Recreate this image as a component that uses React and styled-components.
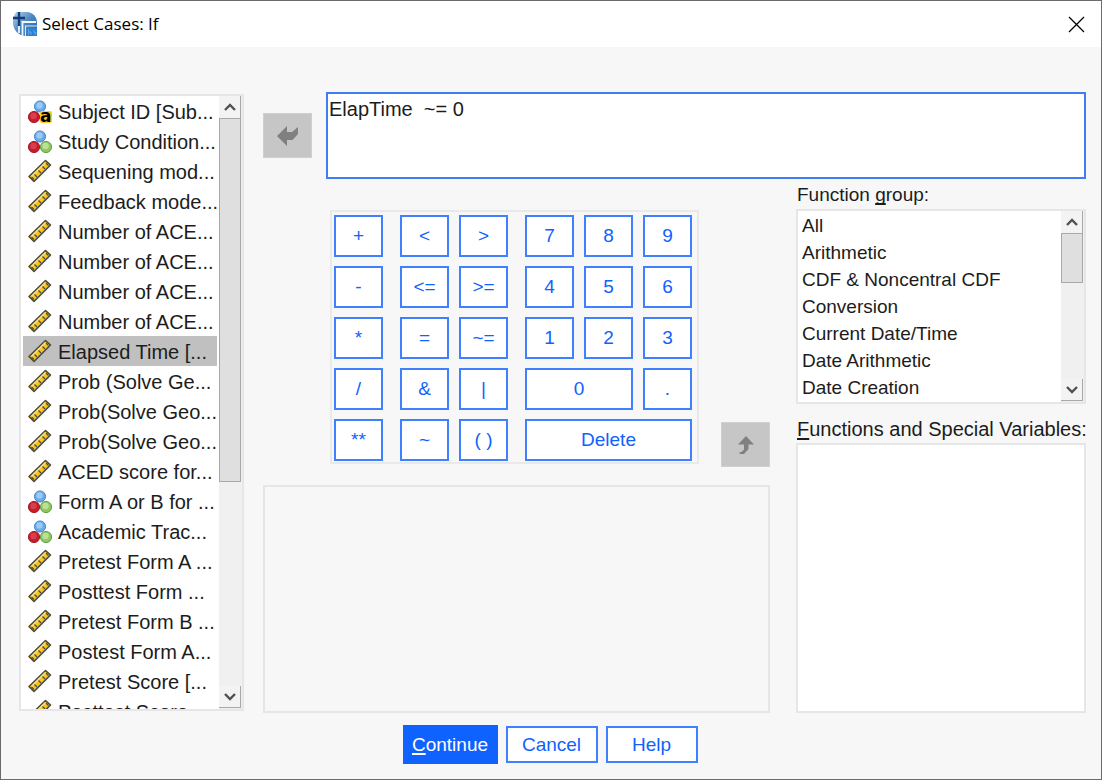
import React, { useState } from "react";
import styled, { createGlobalStyle, css } from "styled-components";

const BLUE = "#0f62fe";

const GlobalStyle = createGlobalStyle`
  *, *::before, *::after { box-sizing: border-box; }
  body {
    margin: 0;
    font-family: "Liberation Sans", Arial, sans-serif;
    font-size: 20px;
    color: #1c1c1c;
  }
  button, select, textarea { font-family: inherit; margin: 0; }
`;

const Dialog = styled.div`
  display: flex;
  flex-direction: column;
  min-height: 100vh;
  border: 1px solid #6c6a6a;
  background: #f7f7f7;
`;

const TitleBar = styled.header`
  display: flex;
  align-items: center;
  gap: 4px;
  height: 46px;
  padding: 0 16px 0 12px;
  background: #fff;
`;

const Title = styled.h1`
  flex: 1;
  margin: 0;
  font: 400 17px/24px "Open Sans", "Noto Sans", sans-serif;
  color: #000;
`;

const CloseButton = styled.button`
  display: flex;
  padding: 0;
  border: 0;
  background: none;
`;

const Body = styled.main`
  flex: 1;
  display: flex;
  gap: 19px;
  padding: 45px 15px 0 18px;
`;

const Frame = styled.div`
  display: flex;
  border: 2px solid #e6e6e6;
  background: #fff;
  overflow: hidden;
`;

const VariableFrame = styled(Frame)`
  flex: none;
  width: 225px;
  margin: 2px 0;
  contain: size;
`;

const VariableList = styled.ul`
  flex: 1;
  min-width: 0;
  margin: 0;
  padding: 0 2px;
  list-style: none;
`;

const VariableItem = styled.li`
  display: flex;
  align-items: center;
  gap: 5px;
  height: 30px;
  padding: 2px 0 0 5px;
  line-height: 28px;
  white-space: nowrap;
  cursor: default;
  background: ${(p) => (p.$selected ? "#c0c0c0" : "transparent")};
  svg { flex: none; overflow: visible; }
`;

const ScrollBarTrack = styled.div`
  display: flex;
  flex-direction: column;
  flex: none;
  width: 23px;
  padding: 0 1px 1px 0;
  background: #f0f0f0;
`;

const ScrollButton = styled.button`
  display: flex;
  align-items: center;
  justify-content: center;
  height: 22px;
  padding: 0;
  border: 0;
  border-right: 1px solid #a8a8a8;
  border-bottom: ${(p) => (p.$last ? "1px solid #a8a8a8" : "0")};
  background: #f3f3f3;
`;

const ScrollRoom = styled.div`
  flex: 1;
`;

const Thumb = styled.div`
  height: ${(p) => p.$share}%;
  border: 1px solid #a8a8a8;
  background: #dfdfdf;
`;

const Main = styled.div`
  flex: 1;
  min-width: 0;
  display: flex;
  flex-direction: column;
`;

const ExpressionRow = styled.div`
  display: flex;
  align-items: center;
  gap: 14px;
`;

const Expression = styled.textarea`
  flex: 1;
  min-width: 0;
  height: 87px;
  padding: 2px 1px;
  border: 2px solid #3f7df6;
  background: #fff;
  color: #1c1c1c;
  font-size: 20px;
  line-height: 26px;
  resize: none;
  outline: none;
`;

const MoveButton = styled.button`
  display: flex;
  align-items: center;
  justify-content: center;
  flex: none;
  width: 49px;
  height: 45px;
  padding: 0;
  border: 1px solid #d0d0d0;
  background: #c6c6c6;
`;

const LowerRow = styled.div`
  flex: 1;
  display: flex;
  gap: 26px;
`;

const Center = styled.div`
  flex: 1;
  min-width: 0;
  display: flex;
  flex-direction: column;
  gap: 21px;
  padding-top: 31px;
`;

const KeypadRow = styled.div`
  display: flex;
  align-items: flex-end;
  justify-content: space-between;
  padding-left: 67px;
`;

const KeypadMove = styled.div`
  display: flex;
  margin-bottom: -3px;
`;

const Keypad = styled.div`
  display: flex;
  gap: 17px;
  padding: 3px 5px 1px 2px;
  border: 2px solid #e9e9e9;
`;

const KeyGroup = styled.div`
  display: grid;
  grid-template-columns: repeat(${(p) => p.$cols}, 49px);
  grid-auto-rows: 42px;
  gap: 9px 10px;
`;

const outlined = css`
  border: 2px solid #3f80ff;
  background: #fff;
  color: ${BLUE};
`;

const Key = styled.button`
  ${outlined}
  grid-column: span ${(p) => p.$span || 1};
  padding: 0;
  font-size: 19px;
  line-height: 24px;
`;

const Description = styled.section`
  flex: 1;
  min-height: 228px;
  border: 2px solid #e6e6e6;
`;

const Side = styled.div`
  flex: none;
  width: 290px;
  display: flex;
  flex-direction: column;
  gap: 1px;
  padding-top: 3px;
`;

const FieldLabel = styled.label`
  padding-left: 1px;
  font-size: ${(p) => p.$size}px;
  line-height: 26px;
  white-space: nowrap;
`;

const Mnemonic = styled.span`
  text-decoration: underline;
  text-decoration-thickness: 2px;
  text-underline-offset: 2px;
  text-decoration-skip-ink: none;
`;

const GroupFrame = styled(Frame)`
  flex: none;
  height: 195px;
  margin-bottom: 11px;
`;

const List = styled.select`
  flex: 1;
  min-width: 0;
  height: 100%;
  padding: 2px 0 0 2px;
  border: 0;
  border-radius: 0;
  outline: none;
  background: #fff;
  color: #1c1c1c;
  font-size: 19px;
  overflow: hidden;
  scrollbar-width: none;
  option {
    height: 27px;
    min-height: 27px;
    padding: 2px 2px 0;
    line-height: 25px;
  }
`;

const FunctionFrame = styled(Frame)`
  flex: 1;
  min-height: 0;
`;

const Footer = styled.footer`
  display: flex;
  align-items: center;
  justify-content: center;
  gap: 8px;
  padding: 12px 2px 15px 0;
`;

const ActionButton = styled.button`
  ${outlined}
  width: 92px;
  height: 37px;
  padding: 0;
  font-size: 19px;
  line-height: 24px;
  ${(p) =>
    p.$primary &&
    css`
      width: 95px;
      height: 39px;
      border-color: ${BLUE};
      background: ${BLUE};
      color: #fff;
    `}
`;

const AppIcon = () => (
  <svg width="25" height="25" viewBox="0 0 25 25" aria-hidden="true">
    <defs>
      <linearGradient id="appSky" x1="0" y1="0" x2="1" y2="1">
        <stop offset="0" stopColor="#b9d6ec" />
        <stop offset="0.5" stopColor="#4a86c0" />
        <stop offset="1" stopColor="#1f5fa6" />
      </linearGradient>
    </defs>
    <path d="M3 0H14C20 0 24 5 24 11V24H13C6 24 0 18 0 11V6Z" fill="url(#appSky)" />
    <path d="M6 12V21" stroke="#dcebf6" strokeWidth="2" />
    <path d="M9.500 24V10H23" fill="none" stroke="#f2f8fd" strokeWidth="1.800" />
    <path d="M12.500 24V14H24" fill="none" stroke="#dcebf8" strokeWidth="1.200" />
    <path d="M6 0V14M0 6H12" fill="none" stroke="#143a7a" strokeWidth="2.400" />
    <rect x="13.500" y="16" width="10.500" height="8" fill="#2f7fd0" />
    <path d="M15.500 17V23M15.500 20H18V23M21 18V20.500H22.500V23" stroke="#5ea6e6" fill="none" />
  </svg>
);

const balls = {
  blue: ["#b5dbff", "#6aa9e8", "#3f7fc4"],
  red: ["#f0818a", "#c81c2c", "#9c1220"],
  green: ["#d3efb4", "#8fc763", "#5b9638"],
};

const Ball = ({ cx, cy, tone }) => (
  <g>
    <circle cx={cx} cy={cy} r="5.600" fill={balls[tone][1]} stroke={balls[tone][2]} strokeWidth="0.900" />
    <circle cx={cx - 0.5} cy={cy - 1} r="3.200" fill={balls[tone][0]} opacity={tone === "red" ? 0.35 : 0.65} />
  </g>
);

const NominalIcon = ({ string }) => (
  <svg width="25" height="24" viewBox="0 0 25 24" aria-hidden="true">
    <Ball cx={12} cy={6.5} tone="blue" />
    {!string && <Ball cx={18} cy={17} tone="green" />}
    <Ball cx={6} cy={17} tone="red" />
    {string && (
      <>
        <rect x="12" y="11" width="12" height="12" rx="2" fill="#ffc928" />
        <text x="12" y="22" fontFamily="DejaVu Sans, sans-serif" fontWeight="700" fontSize="17" fill="#000">
          a
        </text>
      </>
    )}
  </svg>
);

const ScaleIcon = () => (
  <svg width="25" height="24" viewBox="0 0 25 24" aria-hidden="true">
    <path d="M1 16.500L17.500 0.500L22.500 5L6 21.500Z" fill="#f9c414" stroke="#4a4a40" strokeWidth="1.600" strokeLinejoin="round" />
    <path d="M3.500 16.500L17.500 2.500" stroke="#e9dfb0" strokeWidth="1.600" />
    <path d="M6.500 14.500L9 17M10.500 10.500L13 13M14.500 6.500L17 9M18 3L20.500 5.500M3.500 17L6 19.500" stroke="#4a4a40" strokeWidth="1.200" />
  </svg>
);

const Chevron = ({ down }) => (
  <svg width="14" height="10" viewBox="0 0 14 10" aria-hidden="true">
    <path d={down ? "M2 2L7 7L12 2" : "M2 8L7 3L12 8"} fill="none" stroke="#505050" strokeWidth="2.400" />
  </svg>
);

const LeftArrow = () => (
  <svg width="24" height="22" viewBox="0 0 24 22" aria-hidden="true">
    <path d="M1 11L11 1V7H16L22 2V9L16.500 15H11V21Z" fill="#808080" />
  </svg>
);

const UpArrow = () => (
  <svg width="20" height="20" viewBox="0 0 20 20" aria-hidden="true">
    <path d="M10 1L18 9.500H12.500V14L8 19H3.500V17.500C6 17 8 15.500 8 13.500V9.500H2Z" fill="#808080" />
  </svg>
);

function ScrollBar({ share, name }) {
  return (
    <ScrollBarTrack>
      <ScrollButton type="button" aria-label={`Scroll ${name} up`}>
        <Chevron />
      </ScrollButton>
      <ScrollRoom>
        <Thumb $share={share} />
      </ScrollRoom>
      <ScrollButton type="button" $last aria-label={`Scroll ${name} down`}>
        <Chevron down />
      </ScrollButton>
    </ScrollBarTrack>
  );
}

const variables = [
  ["Subject ID [Sub...", "string"],
  ["Study Condition...", "nominal"],
  ["Sequening mod...", "scale"],
  ["Feedback mode...", "scale"],
  ["Number of ACE...", "scale"],
  ["Number of ACE...", "scale"],
  ["Number of ACE...", "scale"],
  ["Number of ACE...", "scale"],
  ["Elapsed Time [...", "scale"],
  ["Prob (Solve Ge...", "scale"],
  ["Prob(Solve Geo...", "scale"],
  ["Prob(Solve Geo...", "scale"],
  ["ACED score for...", "scale"],
  ["Form A or B for ...", "nominal"],
  ["Academic Trac...", "nominal"],
  ["Pretest Form A ...", "scale"],
  ["Posttest Form ...", "scale"],
  ["Pretest Form B ...", "scale"],
  ["Postest Form A...", "scale"],
  ["Pretest Score [...", "scale"],
  ["Posttest Score ...", "scale"],
];

const keyGroups = [
  { cols: 1, keys: ["+", "-", "*", "/", "**"] },
  { cols: 2, keys: ["<", ">", "<=", ">=", "=", "~=", "&", "|", "~", "( )"] },
  { cols: 3, keys: ["7", "8", "9", "4", "5", "6", "1", "2", "3", "0", ".", "Delete"] },
];

const spans = { 0: 2, Delete: 3 };

const functionGroups = [
  "All",
  "Arithmetic",
  "CDF & Noncentral CDF",
  "Conversion",
  "Current Date/Time",
  "Date Arithmetic",
  "Date Creation",
];

export default function App() {
  const [selected, setSelected] = useState(8);
  return (
    <>
      <GlobalStyle />
      <Dialog role="dialog" aria-labelledby="dialog-title">
        <TitleBar>
          <AppIcon />
          <Title id="dialog-title">Select Cases: If</Title>
          <CloseButton type="button" aria-label="Close">
            <svg width="17" height="17" viewBox="0 0 17 17" aria-hidden="true">
              <path d="M1 1L16 16M16 1L1 16" stroke="#000" strokeWidth="1.300" />
            </svg>
          </CloseButton>
        </TitleBar>
        <Body>
          <VariableFrame>
            <VariableList role="listbox" aria-label="Variables">
              {variables.map(([label, kind], i) => (
                <VariableItem
                  key={i}
                  role="option"
                  aria-selected={i === selected}
                  $selected={i === selected}
                  onClick={() => setSelected(i)}
                >
                  {kind === "scale" ? <ScaleIcon /> : <NominalIcon string={kind === "string"} />}
                  {label}
                </VariableItem>
              ))}
            </VariableList>
            <ScrollBar share={64} name="variables" />
          </VariableFrame>
          <Main>
            <ExpressionRow>
              <MoveButton type="button" aria-label="Move to expression">
                <LeftArrow />
              </MoveButton>
              <Expression aria-label="Expression" spellCheck={false} defaultValue="ElapTime  ~= 0" />
            </ExpressionRow>
            <LowerRow>
              <Center>
                <KeypadRow>
                  <Keypad>
                    {keyGroups.map((group) => (
                      <KeyGroup key={group.cols} $cols={group.cols}>
                        {group.keys.map((k) => (
                          <Key key={k} type="button" $span={spans[k]}>
                            {k}
                          </Key>
                        ))}
                      </KeyGroup>
                    ))}
                  </Keypad>
                  <KeypadMove>
                    <MoveButton type="button" aria-label="Insert function">
                      <UpArrow />
                    </MoveButton>
                  </KeypadMove>
                </KeypadRow>
                <Description aria-label="Function description" />
              </Center>
              <Side>
                <FieldLabel htmlFor="function-group" $size={19}>
                  Function <Mnemonic>g</Mnemonic>roup:
                </FieldLabel>
                <GroupFrame>
                  <List id="function-group" size={7}>
                    {functionGroups.map((g) => (
                      <option key={g}>{g}</option>
                    ))}
                  </List>
                  <ScrollBar share={34} name="function groups" />
                </GroupFrame>
                <FieldLabel htmlFor="functions" $size={20}>
                  <Mnemonic>F</Mnemonic>unctions and Special Variables:
                </FieldLabel>
                <FunctionFrame>
                  <List id="functions" size={9} />
                </FunctionFrame>
              </Side>
            </LowerRow>
          </Main>
        </Body>
        <Footer>
          <ActionButton type="button" $primary>
            <Mnemonic>C</Mnemonic>ontinue
          </ActionButton>
          <ActionButton type="button">Cancel</ActionButton>
          <ActionButton type="button">Help</ActionButton>
        </Footer>
      </Dialog>
    </>
  );
}
